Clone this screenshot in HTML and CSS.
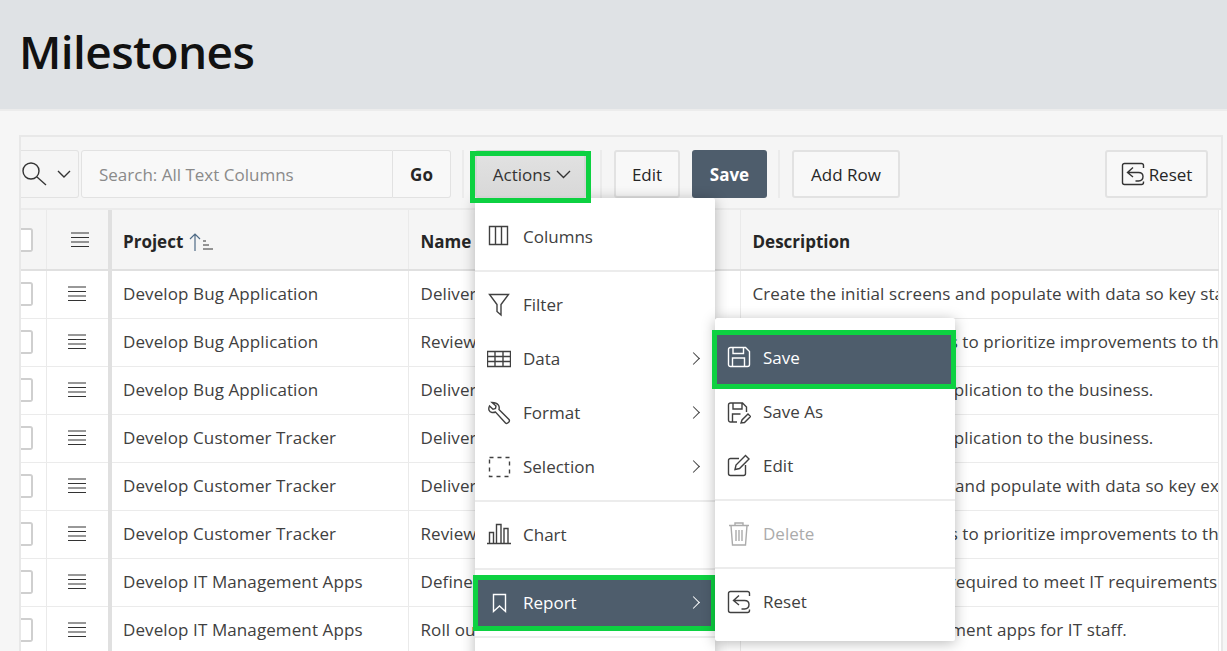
FILE: index.html
```html
<!DOCTYPE html>
<html>
<head>
  <meta http-equiv="Content-Type" content="text/html; charset=UTF-8"/>
  <title>Milestones</title>
  <link rel="stylesheet" href="styles.css">
</head>

<body>
  <svg class="defs" width="0" height="0">
    <symbol id="i-lines" viewBox="0 0 18 16"><path d="M0 1h18M0 5.5h18M0 10h18M0 14.500h18"/></symbol>
    <symbol id="i-columns" viewBox="0 0 24 24"><path d="M2.500 1.500h18v18h-18zM8.500 1.500v18M14.500 1.500v18"/></symbol>
    <symbol id="i-filter" viewBox="0 0 24 24"><path d="M2.500 1.500h19l-7.500 10v10.500l-4-3.500v-7z"/></symbol>
    <symbol id="i-data" viewBox="0 0 24 24"><path d="M.5 4.500h23v15H.5zM.5 9.500h23M.5 14.500h23M8 4.500v15M16 4.500v15"/></symbol>
    <symbol id="i-wrench" viewBox="0 0 24 24"><path d="M5 1.500l4 3.500-.5 2.500-2.500.8L2.500 5C1 8 2 11 5 11.500c1.500.2 2.500 0 3.500-.5l10 11c1.500 1.500 5 -1.500 3.500-3.500L12 8.500c.8-3-.5-7-7-7z"/></symbol>
    <symbol id="i-select" viewBox="0 0 24 24"><path class="dash" d="M2.500 2.500h20v19h-20z"/></symbol>
    <symbol id="i-chart" viewBox="0 0 24 24"><path d="M0 20.500h24M2.500 20.500v-11h4v11M9.500 20.500v-19h4.500v19M17 20.500v-15h4v15"/></symbol>
    <symbol id="i-mark" viewBox="0 0 24 24"><path d="M6.500 3.500h12v17l-6-5.500-6 5.500z"/></symbol>
    <symbol id="i-save" viewBox="0 0 24 24"><path d="M3.500 1.500h15l4 4v13a2 2 0 0 1-2 2h-17a2 2 0 0 1-2-2v-15a2 2 0 0 1 2-2zM6 1.500v6h10.500v-6M5.500 20.500v-8.500h12v8.500"/></symbol>
    <symbol id="i-saveas" viewBox="0 0 24 24"><path d="M10 22H3.500a2 2 0 0 1-2-2V5a2 2 0 0 1 2-2h12l4 4v5M6 3v6h9V3M5.500 22v-8h8M14 23l1-3 6-6 2.500 2.500-6 6z"/></symbol>
    <symbol id="i-edit" viewBox="0 0 24 24"><path d="M12 4.500H3.500a2 2 0 0 0-2 2v13a2 2 0 0 0 2 2h13a2 2 0 0 0 2-2V11M8 15.500l1-4.500 9.500-9.500 3.500 3.500-9.500 9.500z"/></symbol>
    <symbol id="i-trash" viewBox="0 0 24 24"><path d="M2 3.500h20M8 3.500V1h8v2.500M4 3.500l1.500 19.500h13L20 3.500M9 8v11M12 8v11M15 8v11"/></symbol>
    <symbol id="i-reset" viewBox="0 0 24 24"><path d="M22.500 6V3.500a2 2 0 0 0-2-2h-17a2 2 0 0 0-2 2v17a2 2 0 0 0 2 2h17a2 2 0 0 0 2-2v-1M12 5.500l-5.500 5 5.500 4.500M6.500 10.500h11c6 0 6 8 0 8.500h-3"/></symbol>
  </svg>

  <div class="page">
    <div class="hero"><h1>Milestones</h1></div>

    <div class="region">
      <div class="toolbar">
        <div class="searchIcon">
          <svg width="26" height="24" viewBox="0 0 26 24"><circle cx="9" cy="9" r="8"/><path d="M15 15l9 8"/></svg>
          <svg class="chev" width="14" height="8" viewBox="0 0 14 8"><path d="M1 1l6 6 6-6"/></svg>
        </div>
        <div class="searchField">Search: All Text Columns</div>
        <button class="btn go">Go</button>
        <span class="sep"></span>

        <div class="actionsWrap">
          <button class="btn actions">Actions <svg class="chev" width="15" height="9" viewBox="0 0 15 9"><path d="M1 1l6.500 6.500L14 1"/></svg></button>

          <ul class="menu mainMenu">
            <li><svg class="ico"><use href="#i-columns"/></svg>Columns</li>
            <li class="rule"></li>
            <li><svg class="ico"><use href="#i-filter"/></svg>Filter</li>
            <li class="more"><svg class="ico"><use href="#i-data"/></svg>Data</li>
            <li class="more"><svg class="ico"><use href="#i-wrench"/></svg>Format</li>
            <li class="more"><svg class="ico"><use href="#i-select"/></svg>Selection</li>
            <li class="rule"></li>
            <li><svg class="ico"><use href="#i-chart"/></svg>Chart</li>
            <li class="rule"></li>
            <li class="more current"><svg class="ico"><use href="#i-mark"/></svg>Report
              <ul class="menu subMenu">
                <li class="current"><svg class="ico"><use href="#i-save"/></svg>Save</li>
                <li><svg class="ico"><use href="#i-saveas"/></svg>Save As</li>
                <li><svg class="ico"><use href="#i-edit"/></svg>Edit</li>
                <li class="rule"></li>
                <li class="disabled"><svg class="ico"><use href="#i-trash"/></svg>Delete</li>
                <li class="rule"></li>
                <li><svg class="ico"><use href="#i-reset"/></svg>Reset</li>
              </ul>
            </li>
            <li class="rule"></li>
          </ul>
        </div>

        <span class="sep"></span>
        <button class="btn edit">Edit</button>
        <button class="btn primary">Save</button>
        <span class="sep"></span>
        <button class="btn addRow">Add Row</button>
        <button class="btn reset"><svg class="ico"><use href="#i-reset"/></svg>Reset</button>
      </div>

      <table>
        <colgroup>
          <col class="cCheck"><col class="cMenu"><col class="cProject"><col class="cName"><col>
        </colgroup>
        <thead>
          <tr>
            <th><span class="check"></span></th>
            <th class="lines"><svg class="bars"><use href="#i-lines"/></svg></th>
            <th>Project <svg class="sort" width="26" height="18" viewBox="0 0 26 18"><path class="blue" d="M7 18V1M2 6l5-5 5 5"/><path d="M15 8h3M15 12h6M15 16h10"/></svg></th>
            <th>Name</th>
            <th>Description</th>
          </tr>
        </thead>
        <tbody>
          <tr><td><span class="check"></span></td><td class="lines"><svg class="bars"><use href="#i-lines"/></svg></td><td>Develop Bug Application</td><td>Deliver Proof of Concept</td><td>Create the initial screens and populate with data so key stakeholders can review the application</td></tr>
          <tr><td><span class="check"></span></td><td class="lines"><svg class="bars"><use href="#i-lines"/></svg></td><td>Develop Bug Application</td><td>Review with Stakeholders</td><td>Meet with key retail users to prioritize improvements to the application</td></tr>
          <tr><td><span class="check"></span></td><td class="lines"><svg class="bars"><use href="#i-lines"/></svg></td><td>Develop Bug Application</td><td>Deliver Application</td><td>Deliver the completed application to the business.</td></tr>
          <tr><td><span class="check"></span></td><td class="lines"><svg class="bars"><use href="#i-lines"/></svg></td><td>Develop Customer Tracker</td><td>Deliver Application</td><td>Deliver the completed application to the business.</td></tr>
          <tr><td><span class="check"></span></td><td class="lines"><svg class="bars"><use href="#i-lines"/></svg></td><td>Develop Customer Tracker</td><td>Deliver Proof of Concept</td><td>Create the initial screens and populate with data so key executives can review the application</td></tr>
          <tr><td><span class="check"></span></td><td class="lines"><svg class="bars"><use href="#i-lines"/></svg></td><td>Develop Customer Tracker</td><td>Review with Stakeholders</td><td>Meet with key retail users to prioritize improvements to the application</td></tr>
          <tr><td><span class="check"></span></td><td class="lines"><svg class="bars"><use href="#i-lines"/></svg></td><td>Develop IT Management Apps</td><td>Define Applications</td><td>Define new applications required to meet IT requirements</td></tr>
          <tr><td><span class="check"></span></td><td class="lines"><svg class="bars"><use href="#i-lines"/></svg></td><td>Develop IT Management Apps</td><td>Roll out Applications</td><td>Roll out these IT management apps for IT staff.</td></tr>
        </tbody>
      </table>
    </div>
  </div>
</body>
</html>
```

FILE: styles.css
```css
html, body {
  margin: 0;
  padding: 0;
}
body {
  font-size: 17px;
  font-family: "Open Sans", "Noto Sans", sans-serif;
  color: #262626;
  background: #f6f6f6;
}
.defs {
  position: absolute;
}
.page {
  height: 651px;
  overflow: hidden;
}

/* title band */
.hero {
  height: 111px;
  box-sizing: border-box;
  padding: 19px 19px 0;
  background: #dfe2e5;
  border-bottom: 2px solid #ececec;
}
h1 {
  margin: 0;
  font-size: 46px;
  line-height: 64px;
  font-weight: 600;
  letter-spacing: -0.6px;
  color: #111;
}

/* report region */
.region {
  margin: 24px 4px 0 19px;
  border-top: 2px solid #e8e8e8;
  border-left: 2px solid #e8e8e8;
  border-right: 2px solid #e8e8e8;
  background: #fff;
}
.toolbar {
  display: flex;
  align-items: center;
  height: 73px;
  box-sizing: border-box;
  padding: 2px 13px 0 0;
  background: #f5f5f5;
  border-bottom: 2px solid #ebebeb;
}
.searchIcon {
  display: flex;
  align-items: center;
  gap: 9px;
  width: 58px;
  height: 48px;
  box-sizing: border-box;
  padding-left: 1px;
  border: 1px solid #e2e2e2;
  border-left: 0;
  border-radius: 0 3px 3px 0;
}
.searchIcon svg {
  fill: none;
  stroke: #333;
  stroke-width: 1.4;
}
.chev {
  fill: none;
  stroke: #333;
  stroke-width: 1.4;
}
.searchField {
  margin-left: 2px;
  width: 312px;
  height: 48px;
  box-sizing: border-box;
  padding-left: 17px;
  line-height: 48px;
  color: #8a8a8a;
  background: #f8f8f8;
  border: 1px solid #e2e2e2;
  border-radius: 3px 0 0 3px;
}
.btn {
  height: 48px;
  box-sizing: border-box;
  padding: 1px 0 0;
  font: inherit;
  color: #262626;
  background: #f8f8f8;
  border: 2px solid #e2e2e2;
  border-radius: 3px;
}
.go {
  width: 58px;
  font-weight: 700;
  border-width: 1px;
  border-left: 0;
  border-radius: 0 3px 3px 0;
}
.sep {
  width: 2px;
  height: 48px;
  margin: 0 12px 0 11px;
  background: #ebebeb;
}
.actionsWrap {
  position: relative;
  margin-left: -1px;
}
.actionsWrap + .sep {
  margin-left: 14px;
}
.actions {
  position: relative;
  z-index: 3;
  display: block;
  width: 111px;
  padding-left: 3px;
  background: linear-gradient(#e2e2e2, #d8d8d8);
  border-color: #d4d4d4;
  color: #333;
}
.actions::after,
li.current::after {
  content: "";
  position: absolute;
  border: 5px solid #0dd141;
  pointer-events: none;
}
.actions::after {
  inset: -1px -7px -7px -7px;
}
.actions .chev {
  margin-left: 1px;
  vertical-align: 2px;
}
.edit {
  width: 66px;
  margin-right: 12px;
}
.primary {
  width: 75px;
  font-weight: 700;
  color: #fff;
  background: #4e5d6c;
  border: 0;
}
.addRow {
  width: 108px;
}
.reset {
  display: flex;
  align-items: center;
  justify-content: center;
  gap: 4px;
  width: 103px;
  margin-left: auto;
}

/* grid */
table {
  width: 1198px;
  table-layout: fixed;
  border-collapse: collapse;
}
col.cCheck { width: 25px; }
col.cMenu { width: 64px; }
col.cProject { width: 298px; }
col.cName { width: 332px; }
th, td {
  padding: 0 12px;
  white-space: nowrap;
  overflow: hidden;
  text-align: left;
  border-right: 1px solid #eaeaea;
}
th {
  height: 60px;
  box-sizing: border-box;
  padding-top: 3px;
  font-weight: 700;
  background: #f5f5f5;
  border-bottom: 2px solid #e0e0e0;
}
td {
  height: 48px;
  box-sizing: border-box;
  padding-bottom: 2px;
  color: #404040;
  background: #fff;
  border-bottom: 1px solid #ebebeb;
  letter-spacing: 0.1px;
}
th:nth-child(2), td:nth-child(2) {
  border-right: 4px solid #e0e0e0;
}
th:first-child, td:first-child {
  padding: 0;
}
th:nth-child(3), td:nth-child(3) {
  padding-left: 11px;
}
.check {
  display: block;
  width: 10px;
  height: 20px;
  border: 2px solid #cfcfcf;
  border-left: 0;
  border-radius: 0 3px 3px 0;
  background: #fff;
}
.lines {
  padding: 0;
}
.bars {
  display: block;
  width: 18px;
  height: 16px;
  fill: none;
  stroke: #333;
  stroke-width: 1.2;
}
th .bars { margin-left: 24px; }
td .bars { margin-left: 21px; }
.sort {
  vertical-align: -3px;
  fill: none;
  stroke: #333;
  stroke-width: 1;
}
.sort .blue {
  stroke: #4f6b86;
  stroke-width: 1.2;
}

/* menus */
.menu {
  position: absolute;
  width: 240px;
  box-sizing: border-box;
  margin: 0;
  padding: 12px 0;
  list-style: none;
  color: #404040;
  background: #fff;
  border-radius: 2px;
  box-shadow: 0 2px 14px rgba(0, 0, 0, 0.28);
}
.mainMenu {
  top: 100%;
  left: 0;
  padding-bottom: 60px;
}
.subMenu {
  top: -258px;
  left: 100%;
  padding: 13px 0 12px;
  z-index: 2;
}
.menu li {
  position: relative;
  display: flex;
  align-items: center;
  gap: 12px;
  height: 54px;
  padding-left: 12px;
  font-weight: 400;
}
.menu li.rule {
  display: block;
  height: 2px;
  margin: 6px 0;
  padding: 0;
  background: #ececec;
}
.menu li.more::before {
  content: "";
  position: absolute;
  right: 17px;
  top: 50%;
  width: 8px;
  height: 8px;
  margin-top: -5px;
  border-top: 1.4px solid #404040;
  border-right: 1.4px solid #404040;
  transform: rotate(45deg);
}
.menu li.current {
  color: #fff;
  background: #4e5d6c;
}
.menu li.more.current::before {
  border-color: #fff;
}
.mainMenu > li.current::after {
  inset: -1px -1px -1px -2px;
}
.subMenu > li.current::after {
  inset: -1px -1px -4px -3px;
}
.subMenu {
  color: #404040;
}
.menu li.disabled {
  color: #ababab;
}
.ico {
  flex: none;
  width: 24px;
  height: 24px;
  fill: none;
  stroke: currentColor;
  stroke-width: 1.4;
}
.btn .ico {
  stroke: #333;
}
.dash {
  stroke-dasharray: 4 4;
}
```
